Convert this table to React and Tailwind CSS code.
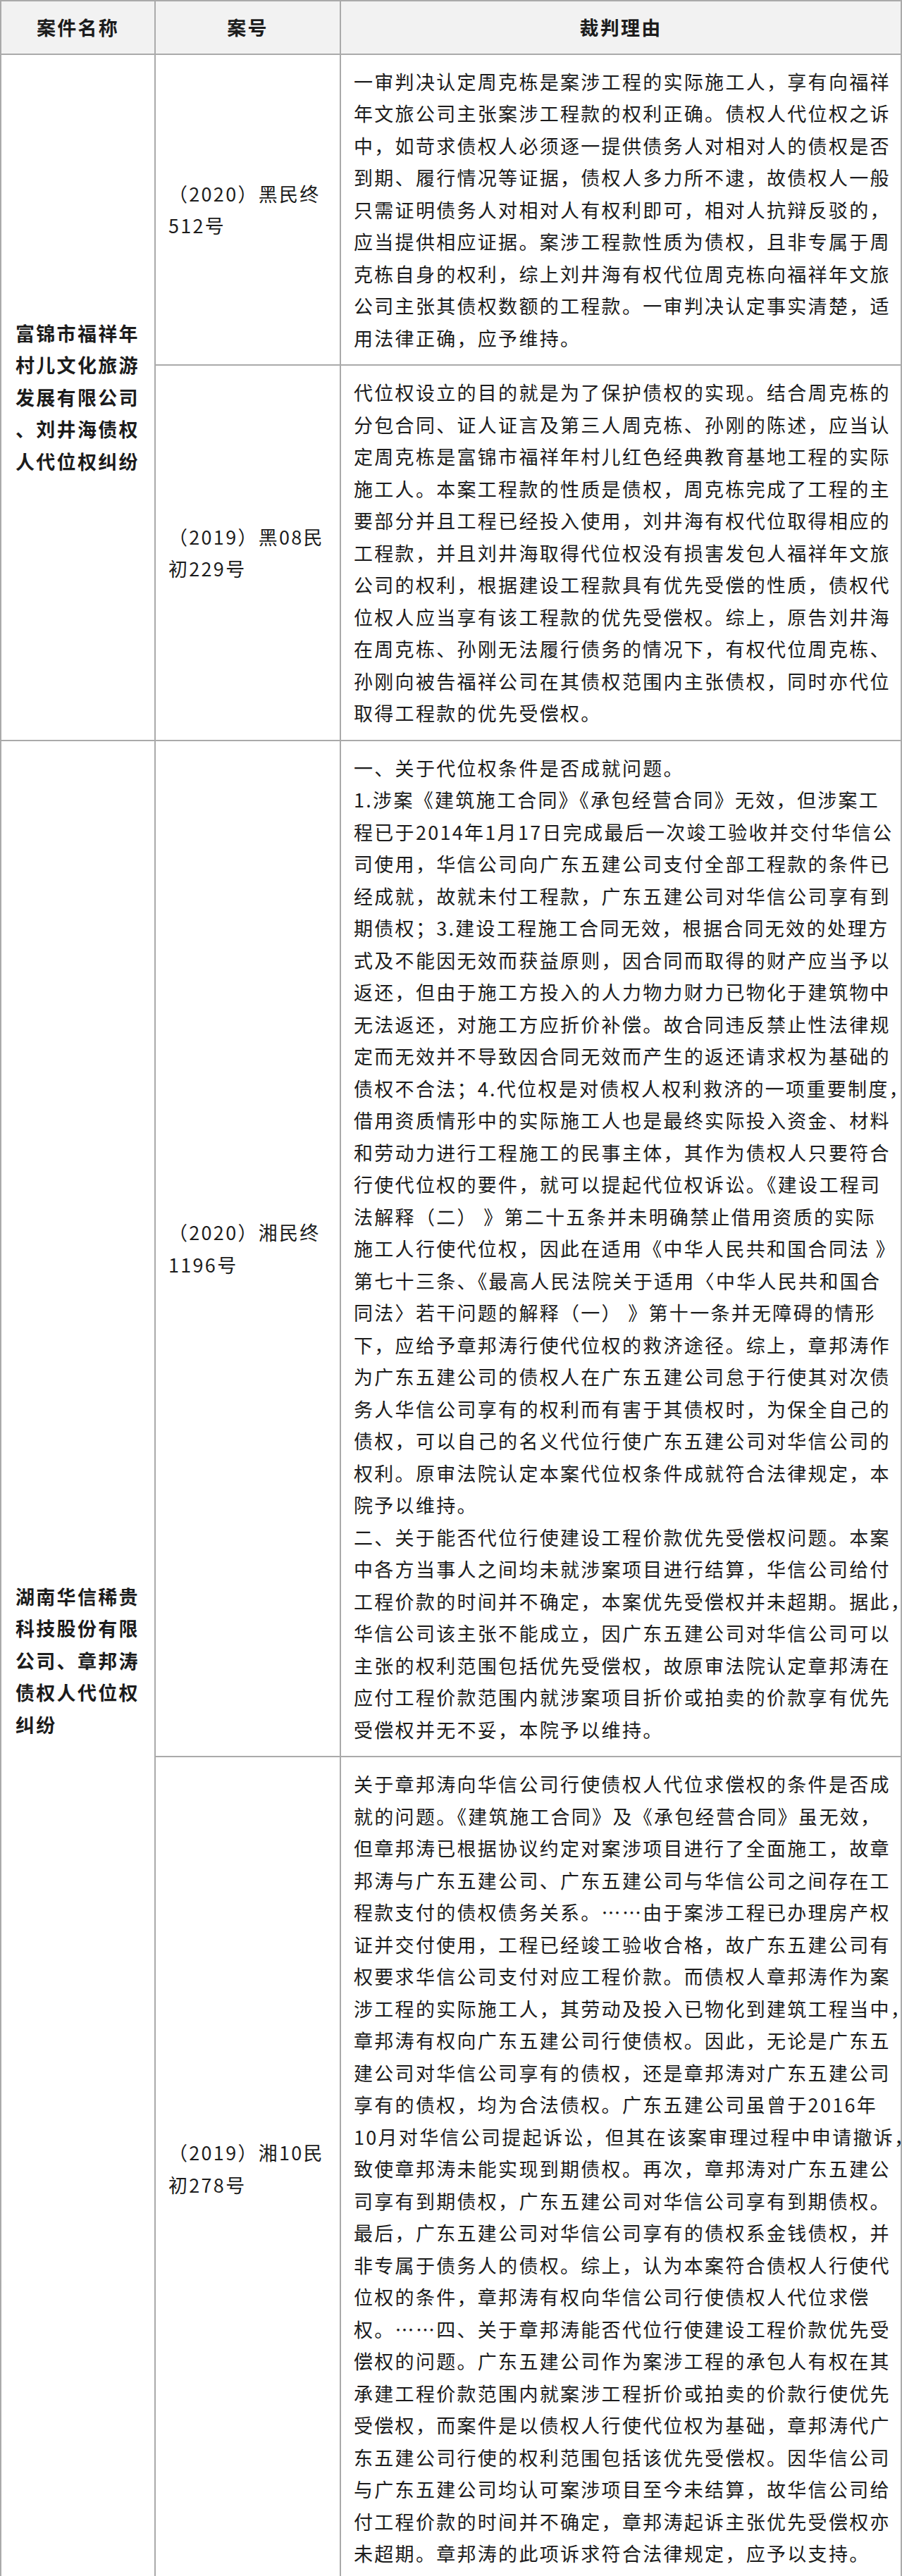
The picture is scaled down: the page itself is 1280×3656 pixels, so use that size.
import React from "react"

const cases = [
  {
    name: ["富锦市福祥年", "村儿文化旅游", "发展有限公司", "、刘井海债权", "人代位权纠纷"],
    rulings: [
      {
        no: ["（2020）黑民终", "512号"],
        reason: [
          "一审判决认定周克栋是案涉工程的实际施工人，享有向福祥",
          "年文旅公司主张案涉工程款的权利正确。债权人代位权之诉",
          "中，如苛求债权人必须逐一提供债务人对相对人的债权是否",
          "到期、履行情况等证据，债权人多力所不逮，故债权人一般",
          "只需证明债务人对相对人有权利即可，相对人抗辩反驳的，",
          "应当提供相应证据。案涉工程款性质为债权，且非专属于周",
          "克栋自身的权利，综上刘井海有权代位周克栋向福祥年文旅",
          "公司主张其债权数额的工程款。一审判决认定事实清楚，适",
          "用法律正确，应予维持。",
        ],
      },
      {
        no: ["（2019）黑08民", "初229号"],
        reason: [
          "代位权设立的目的就是为了保护债权的实现。结合周克栋的",
          "分包合同、证人证言及第三人周克栋、孙刚的陈述，应当认",
          "定周克栋是富锦市福祥年村儿红色经典教育基地工程的实际",
          "施工人。本案工程款的性质是债权，周克栋完成了工程的主",
          "要部分并且工程已经投入使用，刘井海有权代位取得相应的",
          "工程款，并且刘井海取得代位权没有损害发包人福祥年文旅",
          "公司的权利，根据建设工程款具有优先受偿的性质，债权代",
          "位权人应当享有该工程款的优先受偿权。综上，原告刘井海",
          "在周克栋、孙刚无法履行债务的情况下，有权代位周克栋、",
          "孙刚向被告福祥公司在其债权范围内主张债权，同时亦代位",
          "取得工程款的优先受偿权。",
        ],
      },
    ],
  },
  {
    name: ["湖南华信稀贵", "科技股份有限", "公司、章邦涛", "债权人代位权", "纠纷"],
    rulings: [
      {
        no: ["（2020）湘民终", "1196号"],
        reason: [
          "一、关于代位权条件是否成就问题。",
          "1.涉案《建筑施工合同》《承包经营合同》无效，但涉案工",
          "程已于2014年1月17日完成最后一次竣工验收并交付华信公",
          "司使用，华信公司向广东五建公司支付全部工程款的条件已",
          "经成就，故就未付工程款，广东五建公司对华信公司享有到",
          "期债权；3.建设工程施工合同无效，根据合同无效的处理方",
          "式及不能因无效而获益原则，因合同而取得的财产应当予以",
          "返还，但由于施工方投入的人力物力财力已物化于建筑物中",
          "无法返还，对施工方应折价补偿。故合同违反禁止性法律规",
          "定而无效并不导致因合同无效而产生的返还请求权为基础的",
          "债权不合法；4.代位权是对债权人权利救济的一项重要制度，",
          "借用资质情形中的实际施工人也是最终实际投入资金、材料",
          "和劳动力进行工程施工的民事主体，其作为债权人只要符合",
          "行使代位权的要件，就可以提起代位权诉讼。《建设工程司",
          "法解释（二） 》第二十五条并未明确禁止借用资质的实际",
          "施工人行使代位权，因此在适用《中华人民共和国合同法 》",
          "第七十三条、《最高人民法院关于适用〈中华人民共和国合",
          "同法〉若干问题的解释（一） 》第十一条并无障碍的情形",
          "下，应给予章邦涛行使代位权的救济途径。综上，章邦涛作",
          "为广东五建公司的债权人在广东五建公司怠于行使其对次债",
          "务人华信公司享有的权利而有害于其债权时，为保全自己的",
          "债权，可以自己的名义代位行使广东五建公司对华信公司的",
          "权利。原审法院认定本案代位权条件成就符合法律规定，本",
          "院予以维持。",
          "二、关于能否代位行使建设工程价款优先受偿权问题。本案",
          "中各方当事人之间均未就涉案项目进行结算，华信公司给付",
          "工程价款的时间并不确定，本案优先受偿权并未超期。据此，",
          "华信公司该主张不能成立，因广东五建公司对华信公司可以",
          "主张的权利范围包括优先受偿权，故原审法院认定章邦涛在",
          "应付工程价款范围内就涉案项目折价或拍卖的价款享有优先",
          "受偿权并无不妥，本院予以维持。",
        ],
      },
      {
        no: ["（2019）湘10民", "初278号"],
        reason: [
          "关于章邦涛向华信公司行使债权人代位求偿权的条件是否成",
          "就的问题。《建筑施工合同》及《承包经营合同》虽无效，",
          "但章邦涛已根据协议约定对案涉项目进行了全面施工，故章",
          "邦涛与广东五建公司、广东五建公司与华信公司之间存在工",
          "程款支付的债权债务关系。……由于案涉工程已办理房产权",
          "证并交付使用，工程已经竣工验收合格，故广东五建公司有",
          "权要求华信公司支付对应工程价款。而债权人章邦涛作为案",
          "涉工程的实际施工人，其劳动及投入已物化到建筑工程当中，",
          "章邦涛有权向广东五建公司行使债权。因此，无论是广东五",
          "建公司对华信公司享有的债权，还是章邦涛对广东五建公司",
          "享有的债权，均为合法债权。广东五建公司虽曾于2016年",
          "10月对华信公司提起诉讼，但其在该案审理过程中申请撤诉，",
          "致使章邦涛未能实现到期债权。再次，章邦涛对广东五建公",
          "司享有到期债权，广东五建公司对华信公司享有到期债权。",
          "最后，广东五建公司对华信公司享有的债权系金钱债权，并",
          "非专属于债务人的债权。综上，认为本案符合债权人行使代",
          "位权的条件，章邦涛有权向华信公司行使债权人代位求偿",
          "权。……四、关于章邦涛能否代位行使建设工程价款优先受",
          "偿权的问题。广东五建公司作为案涉工程的承包人有权在其",
          "承建工程价款范围内就案涉工程折价或拍卖的价款行使优先",
          "受偿权，而案件是以债权人行使代位权为基础，章邦涛代广",
          "东五建公司行使的权利范围包括该优先受偿权。因华信公司",
          "与广东五建公司均认可案涉项目至今未结算，故华信公司给",
          "付工程价款的时间并不确定，章邦涛起诉主张优先受偿权亦",
          "未超期。章邦涛的此项诉求符合法律规定，应予以支持。",
        ],
      },
    ],
  },
]

// trailing punctuation is set half-width so long lines stay inside the page
function Line({ text }) {
  const last = text.slice(-1)
  if ("，。、；".includes(last)) {
    return (
      <div className="whitespace-pre">
        {text.slice(0, -1)}
        <span className="tracking-normal [font-feature-settings:'halt']">{last}</span>
      </div>
    )
  }
  return <div className="whitespace-pre">{text}</div>
}

function Lines({ lines }) {
  return lines.map((l, i) => <Line key={i} text={l} />)
}

export default function App() {
  return (
    <div className="w-[1280px] bg-white font-['Noto_Sans_CJK_SC','Noto_Sans',sans-serif] text-[27px] leading-[45.5px] tracking-[2.3px] text-[#1c1c1c]">
      <table className="w-full table-fixed border-collapse">
        <colgroup>
          <col className="w-[219px]" />
          <col className="w-[263px]" />
          <col />
        </colgroup>
        <thead>
          <tr className="bg-[#f2f2f2]">
            <th className="border-2 border-[#aaaaaa] py-[14px] text-center font-bold">案件名称</th>
            <th className="border-2 border-[#aaaaaa] py-[14px] text-center font-bold">案号</th>
            <th className="border-2 border-[#aaaaaa] py-[14px] text-center font-bold">裁判理由</th>
          </tr>
        </thead>
        <tbody>
          {cases.map((c, ci) =>
            c.rulings.map((r, ri) => (
              <tr key={`${ci}-${ri}`}>
                {ri === 0 && (
                  <td rowSpan={c.rulings.length} className="border-2 border-[#aaaaaa] pl-[20px] pr-[6px] align-middle font-bold">
                    <Lines lines={c.name} />
                  </td>
                )}
                <td className="border-2 border-[#aaaaaa] pl-[18px] pr-[6px] align-middle">
                  <Lines lines={r.no} />
                </td>
                <td className="border-2 border-[#aaaaaa] pl-[18px] pr-[4px] py-[15px] align-middle">
                  <Lines lines={r.reason} />
                </td>
              </tr>
            ))
          )}
        </tbody>
      </table>
    </div>
  )
}
